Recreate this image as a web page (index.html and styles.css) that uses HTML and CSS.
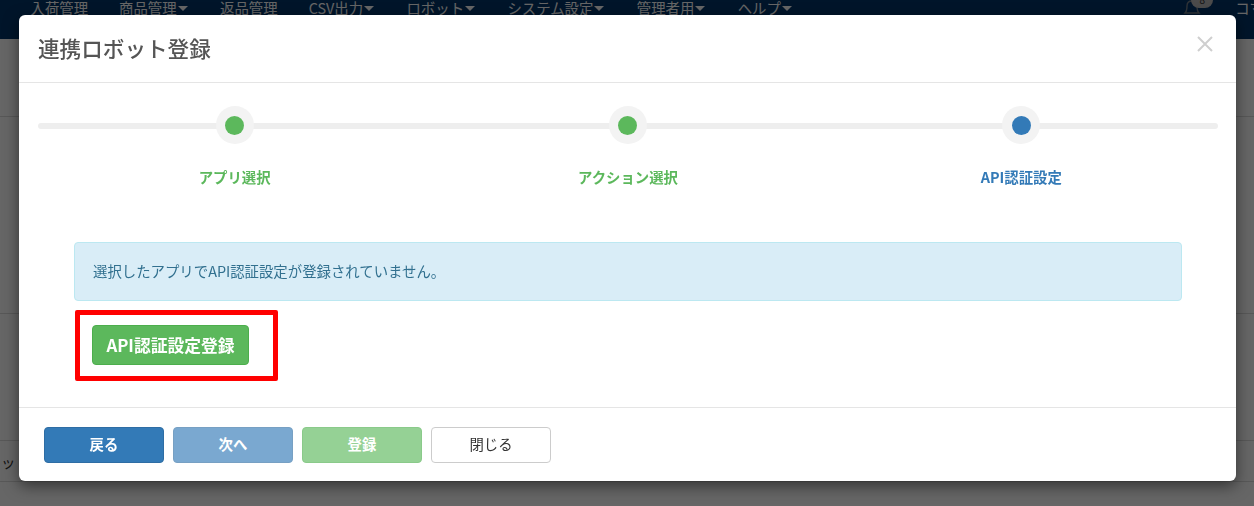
FILE: index.html
```html
<!DOCTYPE html>
<html lang="ja">
<head>
<meta charset="utf-8">
<title>連携ロボット登録</title>
<link rel="stylesheet" href="styles.css">
</head>
<body>
<div class="page">
  <nav class="nav">
    <a class="nav-item">入荷管理</a>
    <a class="nav-item">商品管理<i class="caret"></i></a>
    <a class="nav-item">返品管理</a>
    <a class="nav-item">CSV出力<i class="caret"></i></a>
    <a class="nav-item">ロボット<i class="caret"></i></a>
    <a class="nav-item">システム設定<i class="caret"></i></a>
    <a class="nav-item">管理者用<i class="caret"></i></a>
    <a class="nav-item">ヘルプ<i class="caret"></i></a>
    <span class="nav-right">
      <span class="bell">
        <svg width="20" height="20" viewBox="0 0 20 20" fill="none" stroke="#77818a" stroke-width="1.4"><path d="M3 15c2-2 2-4 2-7 0-3 2-5 5-5s5 2 5 5c0 3 0 5 2 7z"/></svg>
        <span class="badge">8</span>
      </span>
      <span class="nav-user">コマ</span>
    </span>
  </nav>
  <div class="bg-row bg-row-a"></div>
  <div class="bg-row bg-row-b"></div>
  <div class="bg-row bg-row-c"></div>
  <div class="bg-row bg-row-d">ッ</div>
</div>
<div class="overlay"></div>
<div class="modal">
  <header class="modal-header">
    <h4 class="modal-title">連携ロボット登録</h4>
    <svg class="close" width="16" height="16" viewBox="0 0 16 16" stroke="#cfcfcf" stroke-width="2"><path d="M1 1l14 14M15 1L1 15"/></svg>
  </header>
  <section class="modal-body">
    <ol class="steps">
      <li class="step done"><span class="dot"></span><span class="label">アプリ選択</span></li>
      <li class="step done"><span class="dot"></span><span class="label">アクション選択</span></li>
      <li class="step current"><span class="dot"></span><span class="label">API認証設定</span></li>
    </ol>
    <div class="content">
      <div class="alert">選択したアプリでAPI認証設定が登録されていません。</div>
      <div class="highlight"><button class="btn btn-success btn-large">API認証設定登録</button></div>
    </div>
  </section>
  <footer class="modal-footer">
    <button class="btn btn-primary">戻る</button>
    <button class="btn btn-primary is-disabled">次へ</button>
    <button class="btn btn-success is-disabled">登録</button>
    <button class="btn btn-default">閉じる</button>
  </footer>
</div>
</body>
</html>
```
FILE: styles.css
```css
* { box-sizing: border-box; }
html, body { margin: 0; height: 100%; overflow: hidden; }
body {
  font-family: "Noto Sans CJK JP", "Noto Sans", sans-serif;
  font-size: 14.4px;
  color: #333;
  background: #fff;
}
.page { height: 506px; overflow: hidden; }
.nav {
  height: 39px;
  background: #02356a;
  display: flex;
  align-items: flex-start;
  padding-left: 30.5px;
  color: #fff;
  overflow: hidden;
}
.nav-item {
  margin-right: 31px;
  line-height: 16px;
  white-space: nowrap;
  height: 16px;
  display: flex;
  align-items: center;
}
.caret {
  display: inline-block;
  border-top: 5px solid #fff;
  border-left: 5px solid transparent;
  border-right: 5px solid transparent;
  margin-left: 1px;
  margin-right: 1.4px;
}
.nav-right { margin-left: auto; display: flex; margin-right: -10px; }
.bell { position: relative; width: 20px; height: 20px; margin-top: -2px; margin-right: 33px; }
.badge {
  position: absolute;
  left: 9px;
  top: -6px;
  width: 22px;
  height: 16px;
  border-radius: 8px;
  background: #bbb;
  color: #333;
  font-size: 10px;
  line-height: 16px;
  text-align: center;
}
.nav-user { line-height: 16px; white-space: nowrap; }
.bg-row { border-bottom: 1px solid #ddd; }
.bg-row-a { height: 78px; }
.bg-row-b { height: 197px; }
.bg-row-c { height: 127px; }
.bg-row-d { height: 41px; line-height: 41px; text-indent: 1px; }
.overlay { position: fixed; inset: 0; background: rgba(0, 0, 0, .6); }
.modal {
  position: absolute;
  left: 19px;
  top: 15px;
  width: 1217px;
  height: 466px;
  background: #fff;
  border-radius: 6px;
  box-shadow: 0 5px 15px rgba(0, 0, 0, .5);
  display: flex;
  flex-direction: column;
}
.modal-header {
  height: 68px;
  flex: none;
  border-bottom: 1px solid #e5e5e5;
  display: flex;
  align-items: center;
  justify-content: space-between;
  padding: 0 23px 0 19px;
}
.modal-title { margin: 0; font-size: 21.6px; font-weight: 500; color: #555; line-height: 1.3; }
.close { margin-top: -10px; }
.modal-body { flex: 1; padding: 23px 18px 0 19px; }
.steps {
  list-style: none;
  margin: 0;
  padding: 0;
  display: grid;
  grid-template-columns: repeat(3, 1fr);
  position: relative;
}
.steps::before {
  content: "";
  position: absolute;
  left: 0;
  right: 0;
  top: 17px;
  height: 6px;
  border-radius: 3px;
  background: #eee;
}
.step { display: flex; flex-direction: column; align-items: center; position: relative; }
.dot {
  width: 38px;
  height: 38px;
  border-radius: 50%;
  background: #f3f3f3;
  display: flex;
  align-items: center;
  justify-content: center;
}
.dot::after { content: ""; width: 19px; height: 19px; border-radius: 50%; background: currentColor; }
.label { margin-top: 23px; font-size: 14.4px; font-weight: 700; line-height: 20px; }
.done { color: #5cb85c; }
.current { color: #337ab7; }
.content { padding: 55px 36px 0 36px; }
.alert {
  height: 59px;
  background: #d9edf7;
  border: 1px solid #bce8f1;
  border-radius: 4px;
  color: #31708f;
  padding: 0 18px;
  line-height: 55px;
  font-size: 14.4px;
}
.highlight {
  margin: 9px 0 0 1px;
  width: 203px;
  height: 71px;
  border: 5px solid #f00;
  border-radius: 2px;
  padding: 10px 0 0 12px;
}
.btn {
  font-family: inherit;
  border-radius: 4px;
  border: 1px solid transparent;
  font-size: 14.4px;
  font-weight: 700;
  width: 120px;
  height: 36px;
  padding: 0 0 3px;
}
.btn-large { width: 157px; height: 40px; font-size: 16.8px; font-weight: 700; padding: 0; }
.btn-primary { background: #337ab7; border-color: #2e6da4; color: #fff; }
.btn-success { background: #5cb85c; border-color: #4cae4c; color: #fff; }
.btn-default { background: #fff; border-color: #ccc; color: #333; font-weight: 400; }
.is-disabled { opacity: .65; }
.modal-footer {
  height: 74px;
  flex: none;
  border-top: 1px solid #e5e5e5;
  display: flex;
  gap: 9px;
  padding: 19px 25px 0;
}
```
